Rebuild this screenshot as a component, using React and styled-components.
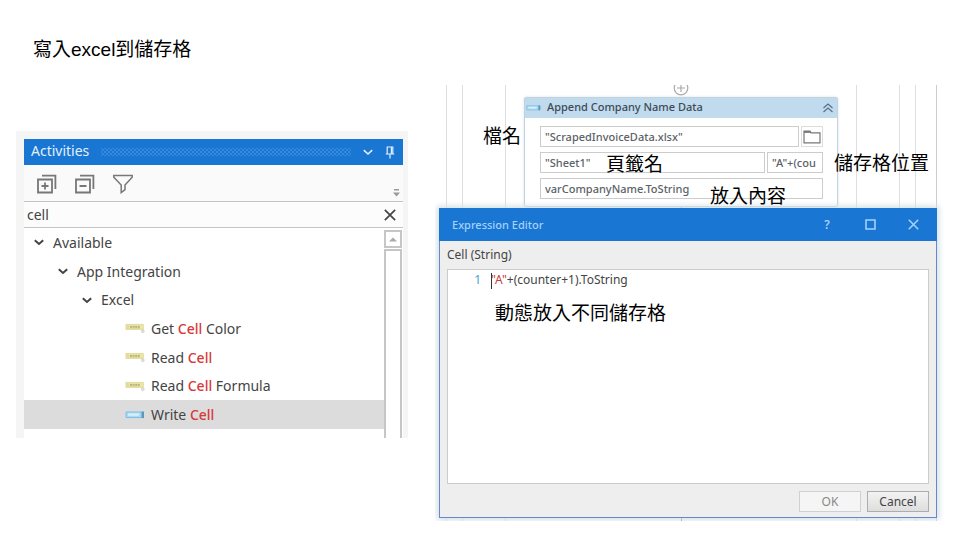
import React from "react";
import styled, { createGlobalStyle } from "styled-components";

const BLUE = "#1976d2";
const UI = `"Noto Sans", "Open Sans", sans-serif`;

const GlobalStyle = createGlobalStyle`
  *, *::before, *::after { box-sizing: border-box; }
  body {
    margin: 0;
    background: #fff;
    color: #444;
    font-family: ${UI};
  }
  button, input { font: inherit; color: inherit; margin: 0; }
`;

const Slide = styled.main`
  padding: 37px 12px 18px 16px;
`;

const Heading = styled.h1`
  margin: 0 0 22px 17px;
  font: 400 19px/26px "Liberation Sans", "Noto Sans CJK TC", sans-serif;
  color: #000;
`;

const Columns = styled.div`
  display: grid;
  grid-template-columns: 392fr 513fr;
  gap: 27px;
  align-items: start;
`;

const IconButton = styled.button`
  display: flex;
  align-items: center;
  justify-content: center;
  padding: 0;
  border: 0;
  background: none;
  color: inherit;
`;

/* ---------- Activities panel ---------- */

const Panel = styled.section`
  margin-top: 46px;
  padding: 8px 5px 0 8px;
  background: #f5f5f5;
  font-size: 14px;
`;

const PanelHeader = styled.header`
  display: flex;
  align-items: center;
  gap: 12px;
  height: 26px;
  padding: 0 8px 0 7px;
  background: ${BLUE};
  color: #e3f0fc;
`;

const PanelTitle = styled.h2`
  margin: 0;
  font-size: 14px;
  line-height: 24px;
  padding-bottom: 2px;
  font-weight: 400;
`;

const Grip = styled.div`
  flex: 1;
  height: 8px;
  background-image: radial-gradient(circle, #4f9be6 0 1px, transparent 1px),
    radial-gradient(circle, #4f9be6 0 1px, transparent 1px);
  background-size: 4px 4px;
  background-position: 0 0, 2px 2px;
  opacity: 0.55;
`;

const PanelToolbar = styled.div`
  display: flex;
  align-items: center;
  gap: 18px;
  height: 37px;
  padding: 2px 3px 0 13px;
  background: #fafafa;
  border-bottom: 1px solid #c4c4c4;
  color: #777;
`;

const Overflow = styled(IconButton)`
  margin: 18px 0 0 auto;
  color: #999;
`;

const SearchRow = styled.div`
  display: flex;
  align-items: center;
  height: 26px;
  padding: 0 7px 0 3px;
  background: #fcfcfc;
  border-bottom: 1px solid #c4c4c4;
`;

const SearchInput = styled.input`
  flex: 1;
  min-width: 0;
  padding: 0;
  border: 0;
  outline: 0;
  background: none;
`;

const TreeArea = styled.div`
  display: flex;
  background: #fff;
`;

const Tree = styled.ul`
  flex: 1;
  display: grid;
  grid-auto-rows: 1fr;
  height: 201px;
  margin: 0 0 9px;
  padding: 0;
  list-style: none;
`;

const TreeRow = styled.li`
  display: flex;
  align-items: center;
  gap: ${(p) => (p.$leaf ? 6 : 9)}px;
  padding-left: ${(p) => p.$indent}px;
  background: ${(p) => (p.$selected ? "#dcdcdc" : "transparent")};
  white-space: pre;
  color: #444;
`;

const Match = styled.mark`
  background: none;
  color: #d63a3a;
  font-weight: 500;
`;

const Scrollbar = styled.div`
  display: flex;
  flex-direction: column;
  gap: 1px;
  width: 19px;
  padding: 2px 1px 0 0;
`;

const ScrollUp = styled(IconButton)`
  height: 18px;
  border: 2px solid #c6c6c6;
  background: #fff;
  color: #aaa;
`;

const ScrollThumb = styled.div`
  flex: 1;
  border: 2px solid #c6c6c6;
  border-bottom: 0;
  background: #fff;
`;

/* ---------- Workflow designer ---------- */

const Stage = styled.section`
  position: relative;
  height: 436px;
  overflow: hidden;
  font-size: 12px;
`;

const Designer = styled.div`
  height: 100%;
  margin-right: 11px;
  padding: 0 20px 0 11px;
  border-right: 1px solid #ccc;
`;

const Sequence = styled.div`
  height: 100%;
  padding: 0 ${(p) => p.$inset}px;
  border: solid #dedede;
  border-width: 0 1px;
`;

const Flow = styled.div`
  display: flex;
  flex-direction: column;
  height: 100%;
`;

const AddStep = styled(IconButton)`
  align-self: center;
  flex: none;
  height: 18px;
  margin-top: -6px;
  color: #aaa;
`;

const Connector = styled.div`
  flex: 1;
  align-self: center;
  width: 1px;
  background: #999;
`;

const Activity = styled.article`
  border: 1px solid #c3d3de;
  border-radius: 2px;
  background: #fff;
  box-shadow: 0 0 3px #d8e2e8;
`;

const ActivityHeader = styled.header`
  display: flex;
  align-items: center;
  gap: 6px;
  height: 20px;
  padding: 0 3px 0 1px;
  background: #c1dbee;
  color: #3d4a55;
`;

const ActivityTitle = styled.h3`
  flex: 1;
  margin: 0;
  padding-bottom: 2px;
  font: 500 11px/16px ${UI};
`;

const Fields = styled.div`
  display: grid;
  gap: 5px;
  padding: 8px 14px 7px 15px;
`;

const FieldRow = styled.div`
  display: flex;
  gap: 2px;
`;

const Field = styled.input`
  flex: ${(p) => (p.$short ? "0 0 56px" : "1")};
  min-width: 0;
  height: 21px;
  padding: 0 4px;
  border: 1px solid #ccc;
  background: #fff;
  color: #5c6268;
  font-size: 11px;
  font-weight: 500;
  outline: 0;
`;

const Browse = styled(IconButton)`
  width: 22px;
  border: 1px solid #ddd;
  background: #fff;
  color: #777;
`;

/* ---------- Expression Editor ---------- */

const Dialog = styled.div`
  position: absolute;
  inset: 123px 11px 3px 4px;
  display: flex;
  flex-direction: column;
  border: 1px solid #6688cc;
  background: #eee;
  box-shadow: 0 0 6px 2px #d3dfe6;
  font-size: 12px;
`;

const DialogHeader = styled.header`
  display: flex;
  align-items: center;
  gap: 31px;
  height: 33px;
  padding: 0 18px 0 13px;
  margin: -1px -1px 0;
  background: ${BLUE};
  color: #a6d1fa;
`;

const DialogTitle = styled.h2`
  flex: 1;
  margin: 0;
  font: 500 11px/16px ${UI};
`;

const WindowButton = styled(IconButton)`
  width: 12px;
  height: 16px;
  font-size: 12px;
  font-weight: 600;
`;

const EditorLabel = styled.div`
  padding: 4px 7px 0;
  height: 28px;
  line-height: 20px;
`;

const Editor = styled.div`
  flex: 1;
  display: grid;
  grid-template-columns: 33px 1fr;
  gap: 10px;
  margin: 0 7px;
  border: 1px solid #ccc;
  background: #fff;
  line-height: 19px;
`;

const LineNumber = styled.span`
  text-align: right;
  color: #4aa3c7;
`;

const Code = styled.div`
  outline: 0;
  white-space: pre;
`;

const Caret = styled.i`
  display: inline-block;
  width: 1px;
  height: 16px;
  margin-right: -1px;
  vertical-align: middle;
  background: #333;
`;

const StringLiteral = styled.span`
  color: #c43c3c;
`;

const DialogFooter = styled.footer`
  display: flex;
  justify-content: flex-end;
  gap: 6px;
  padding: 7px 7px 5px;
`;

const DialogButton = styled.button`
  width: 62px;
  height: 21px;
  padding: 0;
  border: 1px solid #adadad;
  background: linear-gradient(#f3f3f3, #dedede);
  color: #444;
  line-height: 18px;
  &:disabled {
    border-color: #d0d0d0;
    background: #f5f5f5;
    color: #888;
  }
`;

const Note = styled.span`
  position: absolute;
  left: ${(p) => p.$x}px;
  top: ${(p) => p.$y}px;
  font: 400 19px/24px "Noto Sans CJK TC", sans-serif;
  color: #000;
  white-space: nowrap;
  pointer-events: none;
`;

/* ---------- Icons ---------- */

const StackIcon = ({ plus }) => (
  <svg width="20" height="20" viewBox="0 0 20 20" fill="none" stroke="currentColor" strokeWidth="1.8">
    <path d="M1 5.5h14v13H1zM5 1.6h13.4V15M4.5 12h7" />
    {plus && <path d="M8 8.5v7" />}
  </svg>
);

const FunnelIcon = () => (
  <svg width="20" height="20" viewBox="0 0 20 20" fill="none" stroke="currentColor" strokeWidth="1.5">
    <path d="M.8 1.5h18.4v1.7L12 11v4.6l-3.8 3V11L.8 3.2z" />
  </svg>
);

const Chevron = ({ w = 2 }) => (
  <svg width="10" height="8" viewBox="0 0 10 8" fill="none" stroke="currentColor" strokeWidth={w}>
    <path d="M.8 2.2 5 6l4.2-3.8" />
  </svg>
);

const PinIcon = () => (
  <svg width="10" height="13" viewBox="0 0 10 13" fill="none" stroke="currentColor" strokeWidth="1.2">
    <path d="M2.2 7.5V1h5.6v6.5M6.4 1v6.5M.8 8h8.4M5 8v4.5" />
  </svg>
);

const OverflowIcon = () => (
  <svg width="7" height="8" viewBox="0 0 7 8" fill="currentColor">
    <path d="M1 0h5v1.5H1zM0 3.5h7L3.5 7.5z" />
  </svg>
);

const Cross = ({ size, w }) => (
  <svg width={size} height={size} viewBox="0 0 10 10" fill="none" stroke="currentColor" strokeWidth={w}>
    <path d="m.7.7 8.6 8.6M9.3.7.7 9.3" />
  </svg>
);

const UpTriangle = () => (
  <svg width="8" height="5" viewBox="0 0 8 5" fill="currentColor">
    <path d="M0 4.5 4 .5l4 4z" />
  </svg>
);

const ReadIcon = () => (
  <svg width="20" height="12" viewBox="0 0 20 12">
    <path fill="#ece7a6" stroke="#dcd592" strokeWidth=".8" d="M.9 2.4h17.4v5H.9z" />
    <path stroke="#b0ab78" strokeWidth="1" strokeDasharray="2 .6" d="M5 4.4h10M5 5.8h10" />
    <path stroke="#d3cd9c" d="M3 3v4" />
    <circle cx="17.8" cy="9.2" r="1.3" fill="#eee" stroke="#bbb" strokeWidth=".7" />
  </svg>
);

const WriteIcon = ({ small }) => (
  <svg width={small ? 15 : 20} height={small ? 6 : 8} viewBox="0 0 20 8">
    <path fill="#a9d9f2" stroke="#7fbfe2" d="M1 1h17.5v5.6H1z" />
    <path fill="#d7effa" d="M3 2.4h11v2.4H3z" />
    <path fill="#5e97bc" d="M16.5 .6h2.5v6.4h-2.5z" />
  </svg>
);

const PlusCircle = () => (
  <svg width="16" height="16" viewBox="0 0 16 16" fill="none" stroke="currentColor" strokeWidth="1.2">
    <circle cx="8" cy="8" r="6.8" />
    <path d="M8 4v8M4 8h8" />
  </svg>
);

const CollapseIcon = () => (
  <svg width="12" height="10" viewBox="0 0 12 10" fill="none" stroke="#55708a" strokeWidth="1.2">
    <path d="M1.5 5 6 1l4.5 4M1.5 9 6 5l4.5 4" />
  </svg>
);

const FolderIcon = () => (
  <svg width="18" height="14" viewBox="0 0 18 14" fill="none" stroke="currentColor" strokeWidth="1.2">
    <path d="M1 12.8V1.2h6l1 1.6h9v10z" />
    <path strokeWidth="1.8" d="M1 2h6.5" />
  </svg>
);

const MaximizeIcon = () => (
  <svg width="11" height="11" viewBox="0 0 11 11" fill="none" stroke="currentColor" strokeWidth="1.6">
    <path d="M1 1h9v9H1z" />
  </svg>
);

/* ---------- Data ---------- */

const groups = [
  { name: "Available", indent: 10 },
  { name: "App Integration", indent: 34 },
  { name: "Excel", indent: 58 },
];

const activities = [
  { before: "Get ", after: " Color" },
  { before: "Read ", after: "" },
  { before: "Read ", after: " Formula" },
  { before: "Write ", after: "", write: true, selected: true },
];

function ActivitiesPanel() {
  return (
    <Panel>
      <PanelHeader>
        <PanelTitle>Activities</PanelTitle>
        <Grip />
        <IconButton aria-label="Panel options"><Chevron w={1.6} /></IconButton>
        <IconButton aria-label="Pin panel"><PinIcon /></IconButton>
      </PanelHeader>
      <PanelToolbar>
        <IconButton aria-label="Expand all"><StackIcon plus /></IconButton>
        <IconButton aria-label="Collapse all"><StackIcon /></IconButton>
        <IconButton aria-label="Filter"><FunnelIcon /></IconButton>
        <Overflow aria-label="More tools"><OverflowIcon /></Overflow>
      </PanelToolbar>
      <SearchRow>
        <SearchInput aria-label="Search activities" defaultValue="cell" />
        <IconButton aria-label="Clear search"><Cross size={12} w={1.4} /></IconButton>
      </SearchRow>
      <TreeArea>
        <Tree>
          {groups.map((g) => (
            <TreeRow key={g.name} $indent={g.indent}>
              <Chevron />
              <span>{g.name}</span>
            </TreeRow>
          ))}
          {activities.map((a) => (
            <TreeRow key={a.before + a.after} $leaf $indent={101} $selected={a.selected}>
              {a.write ? <WriteIcon /> : <ReadIcon />}
              <span>{a.before}<Match>Cell</Match>{a.after}</span>
            </TreeRow>
          ))}
        </Tree>
        <Scrollbar>
          <ScrollUp aria-label="Scroll up"><UpTriangle /></ScrollUp>
          <ScrollThumb />
        </Scrollbar>
      </TreeArea>
    </Panel>
  );
}

function AppendActivity() {
  return (
    <Activity>
      <ActivityHeader>
        <WriteIcon small />
        <ActivityTitle>Append Company Name Data</ActivityTitle>
        <IconButton aria-label="Collapse activity"><CollapseIcon /></IconButton>
      </ActivityHeader>
      <Fields>
        <FieldRow>
          <Field aria-label="Workbook path" defaultValue={'"ScrapedInvoiceData.xlsx"'} />
          <Browse aria-label="Browse"><FolderIcon /></Browse>
        </FieldRow>
        <FieldRow>
          <Field aria-label="Sheet name" defaultValue={'"Sheet1"'} />
          <Field aria-label="Cell" $short defaultValue={'"A"+(cou'} />
        </FieldRow>
        <FieldRow>
          <Field aria-label="Value" defaultValue="varCompanyName.ToString" />
        </FieldRow>
      </Fields>
    </Activity>
  );
}

function ExpressionEditor() {
  return (
    <Dialog role="dialog" aria-labelledby="editor-title">
      <DialogHeader>
        <DialogTitle id="editor-title">Expression Editor</DialogTitle>
        <WindowButton aria-label="Help">?</WindowButton>
        <WindowButton aria-label="Maximize"><MaximizeIcon /></WindowButton>
        <WindowButton aria-label="Close"><Cross size={11} w={1.4} /></WindowButton>
      </DialogHeader>
      <EditorLabel id="editor-label">Cell (String)</EditorLabel>
      <Editor>
        <LineNumber>1</LineNumber>
        <Code
          role="textbox"
          aria-multiline="true"
          aria-labelledby="editor-label"
          contentEditable
          suppressContentEditableWarning
          spellCheck={false}
        >
          <Caret />
          <StringLiteral>"A"</StringLiteral>+(counter+1).ToString
        </Code>
      </Editor>
      <DialogFooter>
        <DialogButton disabled>OK</DialogButton>
        <DialogButton>Cancel</DialogButton>
      </DialogFooter>
    </Dialog>
  );
}

export default function App() {
  return (
    <>
      <GlobalStyle />
      <Slide>
        <Heading>寫入excel到儲存格</Heading>
        <Columns>
          <ActivitiesPanel />
          <Stage>
            <Designer>
              <Sequence $inset={15}>
                <Sequence $inset={42}>
                  <Sequence $inset={18}>
                    <Flow>
                      <AddStep aria-label="Add activity"><PlusCircle /></AddStep>
                      <AppendActivity />
                      <Connector />
                    </Flow>
                  </Sequence>
                </Sequence>
              </Sequence>
            </Designer>
            <ExpressionEditor />
            <Note $x={48} $y={38}>檔名</Note>
            <Note $x={171} $y={66}>頁籤名</Note>
            <Note $x={399} $y={65}>儲存格位置</Note>
            <Note $x={275} $y={98}>放入內容</Note>
            <Note $x={60} $y={215}>動態放入不同儲存格</Note>
          </Stage>
        </Columns>
      </Slide>
    </>
  );
}
